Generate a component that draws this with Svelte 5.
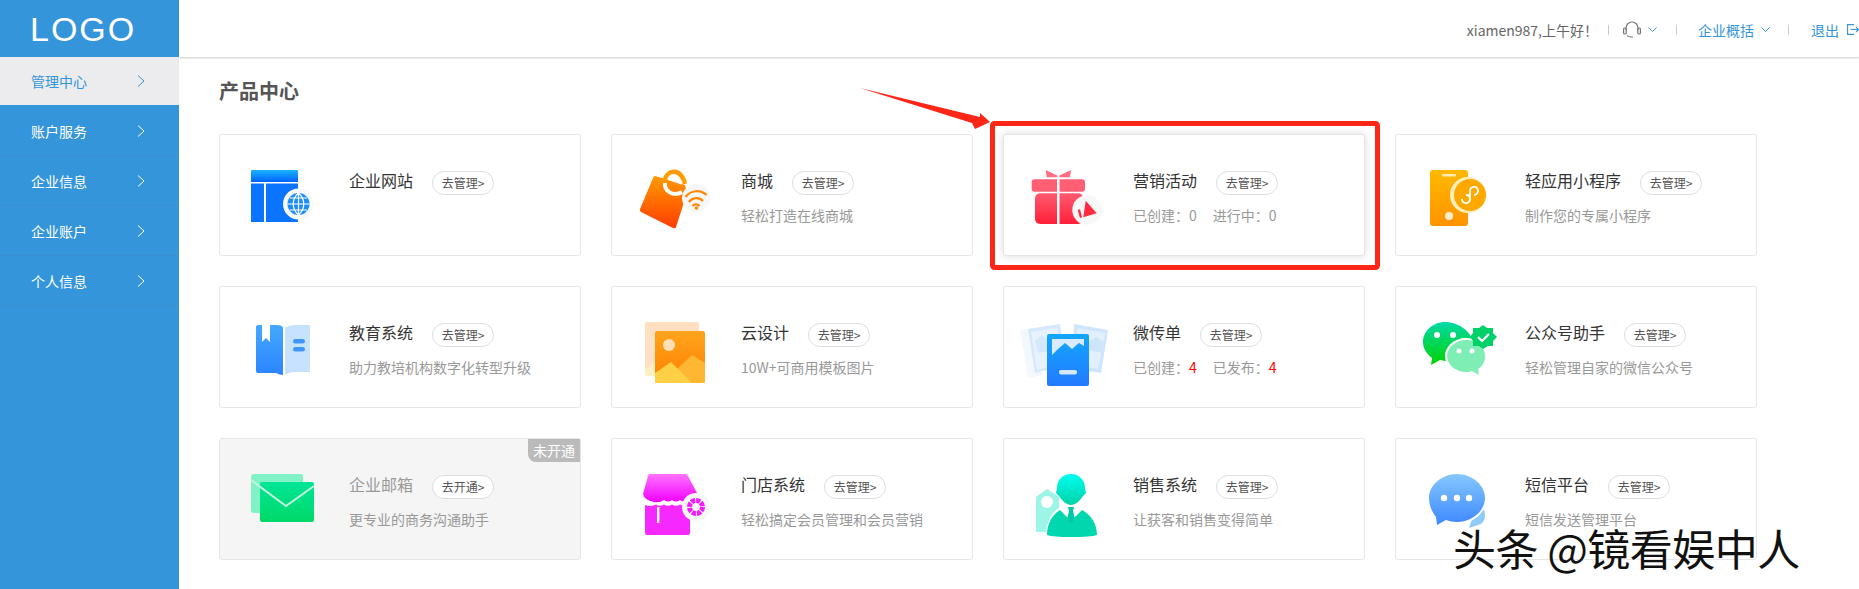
<script>
    const menu = ["管理中心", "账户服务", "企业信息", "企业账户", "个人信息"];

    const cards = [
        { icon: "site", name: "企业网站", desc: "" },
        { icon: "mall", name: "商城", desc: "轻松打造在线商城" },
        { icon: "gift", name: "营销活动", stats: [["已创建：", "0"], ["进行中：", "0"]], hover: true },
        { icon: "mini", name: "轻应用小程序", desc: "制作您的专属小程序" },
        { icon: "edu", name: "教育系统", desc: "助力教培机构数字化转型升级" },
        { icon: "design", name: "云设计", desc: "10W+可商用模板图片" },
        { icon: "flyer", name: "微传单", stats: [["已创建：", "4"], ["已发布：", "4"]], red: true },
        { icon: "wechat", name: "公众号助手", desc: "轻松管理自家的微信公众号" },
        { icon: "mail", name: "企业邮箱", desc: "更专业的商务沟通助手", off: true },
        { icon: "store", name: "门店系统", desc: "轻松搞定会员管理和会员营销" },
        { icon: "sales", name: "销售系统", desc: "让获客和销售变得简单" },
        { icon: "sms", name: "短信平台", desc: "短信发送管理平台" }
    ];
</script>

<div class="page">
    <aside>
        <div class="logo">LOGO</div>
        {#each menu as item, i}
            <div class="menu-item" class:active={i == 0}>
                <span>{item}</span>
                <svg width="8" height="12" viewBox="0 0 8 12"><path d="M1 .5 7 6 1 11.500" fill="none" stroke="currentColor" stroke-width="1" /></svg>
            </div>
        {/each}
    </aside>

    <main>
        <header>
            <span class="hello">xiamen987,上午好！</span>
            <i class="sep"></i>
            <svg class="headset" width="18" height="17" viewBox="0 0 18 17" fill="none" stroke="#777" stroke-width="1.200">
                <path d="M3 9V7a6 6 0 0 1 12 0v2" />
                <rect x=".6" y="7" width="2.600" height="6" rx="1" />
                <rect x="14.800" y="7" width="2.600" height="6" rx="1" />
                <path d="M4 14.500c1 1.500 3 1.500 6 1.500" />
            </svg>
            <svg class="chev" width="9" height="5" viewBox="0 0 9 5"><path d="M.5.500 4.500 4.500 8.500.5" fill="none" stroke="#3595db" /></svg>
            <i class="sep sep2"></i>
            <span class="link">企业概括</span>
            <svg class="chev" width="9" height="5" viewBox="0 0 9 5"><path d="M.5.500 4.500 4.500 8.500.5" fill="none" stroke="#3595db" /></svg>
            <i class="sep sep3"></i>
            <span class="link">退出</span>
            <svg class="logout" width="12" height="11" viewBox="0 0 12 11" fill="none" stroke="#3595db" stroke-width="1.100">
                <path d="M7 .6H.6v9.800H7M3.500 5.500H11.500M9 3l2.500 2.500L9 8" />
            </svg>
        </header>

        <h2>产品中心</h2>

        <div class="grid">
            {#each cards as c}
                <div class="card" class:off={c.off} class:hover={c.hover}>
                    <svg class="icon" width="80" height="80" viewBox="0 0 80 80">
                        <defs>
                            <linearGradient id="g-{c.icon}" x1="0" y1="0" x2="0" y2="1">
                                {#if c.icon == "site"}<stop offset="0" stop-color="#19b5ff" /><stop offset="1" stop-color="#0062ff" />
                                {:else if c.icon == "mall"}<stop offset="0" stop-color="#ff9a00" /><stop offset="1" stop-color="#ff3d00" />
                                {:else if c.icon == "gift"}<stop offset="0" stop-color="#ff5a70" /><stop offset="1" stop-color="#ff1f38" />
                                {:else if c.icon == "mini"}<stop offset="0" stop-color="#ffb900" /><stop offset="1" stop-color="#ff9300" />
                                {:else if c.icon == "edu"}<stop offset="0" stop-color="#45a8ff" /><stop offset="1" stop-color="#2b84ff" />
                                {:else if c.icon == "design"}<stop offset="0" stop-color="#ffa41c" /><stop offset="1" stop-color="#ff8000" />
                                {:else if c.icon == "flyer"}<stop offset="0" stop-color="#12a8ff" /><stop offset="1" stop-color="#2379ff" />
                                {:else if c.icon == "wechat"}<stop offset="0" stop-color="#00d9a8" /><stop offset="1" stop-color="#00d400" />
                                {:else if c.icon == "mail"}<stop offset="0" stop-color="#00e696" /><stop offset="1" stop-color="#00d968" />
                                {:else if c.icon == "store"}<stop offset="0" stop-color="#ff73ff" /><stop offset="1" stop-color="#f000ff" />
                                {:else if c.icon == "sales"}<stop offset="0" stop-color="#00fff0" /><stop offset="1" stop-color="#00d2a8" />
                                {:else}<stop offset="0" stop-color="#85c8ff" /><stop offset="1" stop-color="#3d88ff" />{/if}
                            </linearGradient>
                        </defs>
                        {#if c.icon == "site"}
                            <path d="M2 16a1 1 0 0 1 1-1h45a1 1 0 0 1 1 1v11H2z" fill="url(#g-site)" />
                            <rect x="2" y="28.500" width="13" height="38.500" fill="#0a74ff" />
                            <rect x="17" y="28.500" width="32" height="38.500" fill="#0a74ff" />
                            <circle cx="49.500" cy="49" r="15.500" fill="#f7f9fb" />
                            <circle cx="49.500" cy="49" r="11" fill="#1e8cf5" />
                            <path d="M38.500 49h22M49.500 38v22M41 43h17M41 55h17M49.500 38c-7 6-7 16 0 22M49.500 38c7 6 7 16 0 22" stroke="#fff" stroke-width="1.200" fill="none" />
                        {:else if c.icon == "mall"}
                            <path d="M14 21 Q12.500 21 12 23L-1 54Q-1.500 56 0 57L32 73Q34.500 74 35 72L46 38 44 30z" fill="url(#g-mall)" />
                            <path d="M23 27C26 13 40 13 44 29" fill="none" stroke="#ff9d00" stroke-width="4.500" />
                            <path d="M24 28C23 36 32 42 41 37" fill="none" stroke="#fff" stroke-width="4" />
                            <path d="M28 23.500 41 28" fill="none" stroke="#fff" stroke-width="3" />
                            <circle cx="55" cy="43" r="14" fill="#f7f7f7" />
                            <path d="M44.500 42a14 14 0 0 1 21-2M48 47a9 9 0 0 1 14-1M51.500 51a4.500 4.500 0 0 1 7 0" fill="none" stroke="#ff8a00" stroke-width="2.200" />
                            <circle cx="55.500" cy="53" r="1.800" fill="#ff8a00" />
                        {:else if c.icon == "gift"}
                            <path d="M12.700 15 24.700 20.700 24 22.300H13.700zM26 20.700 38 15 37 22.300H26.700z" fill="#ff6f83" />
                            <rect x="-1.300" y="24.300" width="53.300" height="12.400" rx="3" fill="#ff5f75" />
                            <rect x="2" y="38.300" width="48.300" height="30.700" rx="5" fill="url(#g-gift)" />
                            <rect x="24" y="24" width="2.500" height="46" fill="#fff" />
                            <circle cx="54" cy="55" r="14.700" fill="#f7f7f7" />
                            <path d="M52.700 45.700 63.700 58.300 50.300 62.300zM44.700 55 47 54.300 49 62 47 63.300z" fill="#ff2b43" />
                        {:else if c.icon == "mini"}
                            <rect x="5" y="15" width="38" height="56" rx="3" fill="url(#g-mini)" />
                            <rect x="17" y="19" width="14" height="2.500" rx="1.200" fill="#ffedb8" />
                            <circle cx="24" cy="61" r="4" fill="#ffeecb" />
                            <circle cx="43" cy="40" r="18" fill="#ffeeb8" />
                            <circle cx="45" cy="40" r="16" fill="#ffa800" />
                            <path d="M37 44c0 6 8 5 8 0v-8c0-5 8-6 8 0 0 3-3 4-4 4M45 44c0-2-1-4-4-4" fill="none" stroke="#fff" stroke-width="1.800" />
                        {:else if c.icon == "edu"}
                            <path d="M7 20a2 2 0 0 1 2-2h4v17l4-4 4 4V18h6q7 0 7 3v47q-3 0-7-2H9a2 2 0 0 1-2-2z" fill="url(#g-edu)" />
                            <path d="M36 21q3-3 13-3h12v47H46q-6 0-10 3z" fill="#c7e2ff" />
                            <rect x="44" y="32" width="12" height="4.500" rx="2.200" fill="#3e98ff" />
                            <rect x="44" y="40" width="12" height="4.500" rx="2.200" fill="#3e98ff" />
                        {:else if c.icon == "design"}
                            <rect x="4" y="15" width="54" height="54" rx="2" fill="#ffe1c2" />
                            <path d="M4 63 14 55V69H6a2 2 0 0 1-2-2z" fill="#fff0c4" />
                            <rect x="14" y="24" width="50" height="52" rx="2" fill="url(#g-design)" />
                            <circle cx="28" cy="38" r="6" fill="#ffe0b5" />
                            <path d="M64 56 51 48 36 62 50 76H62a2 2 0 0 0 2-2z" fill="#ffb733" />
                            <path d="M14 66 30 55 51 76H16a2 2 0 0 1-2-2z" fill="#ffd045" />
                        {:else if c.icon == "flyer"}
                            <path d="M-13 23 3 21 10 68-5 71z" fill="#f3f8fe" />
                            <path d="M-5 22 27 17 33 58 2 66z" fill="#d6e8fc" />
                            <path d="M-2 25 24 21 30 56 4 63z" fill="#e7f2fe" />
                            <path d="M2 34 9 28 17 34 25 30 27 42 5 46z" fill="#d6e8fc" />
                            <path d="M41 17 75 23 68 66 40 62z" fill="#cfe5fd" />
                            <path d="M44 21 72 26 65 62 44 58z" fill="#e2effe" />
                            <path d="M56 34 64 30 71 35 69 46 56 43z" fill="#cfe5fd" />
                            <rect x="14" y="27" width="42" height="52" rx="2" fill="url(#g-flyer)" />
                            <path d="M19 32H51V39L46 36 39 42 32 36 25 42 19 48z" fill="#d9ecff" />
                            <rect x="26" y="63" width="18" height="4.500" rx="2" fill="#d4e8ff" />
                        {:else if c.icon == "wechat"}
                            <path d="M20 15C8 15-2 24-2 35c0 7 4 12 9 16l-1 7 9-5c2 0 4 1 5 1h25c3-4 5-9 3-19C46 24 33 15 20 15z" fill="url(#g-wechat)" />
                            <circle cx="12" cy="28" r="3" fill="#fff" />
                            <circle cx="28" cy="28" r="3" fill="#fff" />
                            <path d="M41 31c-11 0-21 8-21 18 0 10 10 17 21 17 2 0 4 0 6-1l9 5-2-7c5-3 7-8 7-14 0-10-9-18-20-18z" fill="#fff" />
                            <path d="M41 33c-10 0-19 7-19 16s9 16 19 16c2 0 4 0 6-1l7 4-1-6c5-3 7-8 7-13 0-9-8-16-19-16z" fill="#7eeeb4" />
                            <circle cx="34" cy="44" r="2.500" fill="#fff" />
                            <circle cx="47" cy="44" r="2.500" fill="#fff" />
                            <path d="M58 18 62 21 68 21 68 26 72 30 68 34 68 39 63 39 58 42 54 39 48 39 48 34 45 30 48 26 48 21 54 21z" fill="#00d068" />
                            <path d="M53 30 57 34 64 27" fill="none" stroke="#fff" stroke-width="2.200" />
                        {:else if c.icon == "mail"}
                            <rect x="2" y="15" width="52" height="39" rx="3" fill="#80f2c6" />
                            <rect x="11" y="23" width="54" height="40" rx="2" fill="url(#g-mail)" />
                            <path d="M2 21 37 47 65 27" fill="none" stroke="#c4f7e0" stroke-width="2" />
                        {:else if c.icon == "store"}
                            <path d="M7 17a2 2 0 0 1 2-2h36l2 2 9 17q0 5-7 8-7 2-10-1-4 3-8 0-4 3-8 0-4 3-10 2-10-2-11-8z" fill="url(#g-store)" />
                            <path d="M4 46q6 2 11-.5 4 2.500 8 0 4 2.500 8 0 4 2.500 8 0 5 2.500 10 .5V74a2 2 0 0 1-2 2H6a2 2 0 0 1-2-2z" fill="#f529ff" />
                            <rect x="16" y="48" width="2.400" height="16" fill="#fff" />
                            <circle cx="55" cy="48" r="14" fill="#f7f7f7" />
                            <circle cx="55" cy="48" r="6.500" fill="none" stroke="#f41cff" stroke-width="5" stroke-dasharray="4 1" />
                        {:else if c.icon == "sales"}
                            <path d="M3 38 14 30 26 38V73H3z" fill="#9cf5e6" />
                            <circle cx="14" cy="43" r="6" fill="#fff" />
                            <path d="M24 78q-11 0-11-3c0-12 6-22 13-26l12 12 12-12c8 4 14 14 14 26q0 3-12 3z" fill="#fff" />
                            <path d="M38 15c8 0 14 6 14 14l1 5-3 3c-3 5-8 9-12 9s-9-4-12-9l-3-3 1-5c0-8 6-14 14-14z" fill="url(#g-sales)" />
                            <path d="M14 76c0-12 6-21 13-25l11 11 11-11c8 4 15 13 15 25q-6 2-26 2-18 0-24-2z" fill="#00d7ae" />
                            <path d="M35 48h6l-1 4 2 8-4 5-4-5 2-8z" fill="#00c9a3" />
                        {:else}
                            <path d="M52 46q8 1 8 10 0 6-4 9l-12 4z" fill="#8ecbfb" />
                            <path d="M32 13c16 0 30 11 30 26 0 14-14 26-30 26-4 0-8-1-11-2l-10 5-1-9C5 54 2 47 2 39 2 24 16 13 32 13z" fill="#fff" />
                            <path d="M32 15c15 0 28 11 28 24S47 63 32 63c-4 0-8-1-11-2l-9 5-1-8C7 53 4 46 4 39 4 26 17 15 32 15z" fill="url(#g-sms)" />
                            <circle cx="19" cy="39" r="3.200" fill="#fff" />
                            <circle cx="32" cy="39" r="3.200" fill="#fff" />
                            <circle cx="44" cy="39" r="3.200" fill="#fff" />
                        {/if}
                    </svg>

                    <div class="info">
                        <div class="top">
                            <span class="name">{c.name}</span>
                            <span class="btn">{c.off ? "去开通" : "去管理"}&gt;</span>
                        </div>
                        {#if c.stats}
                            <div class="desc">
                                {#each c.stats as s}
                                    <span class="stat">{s[0]}<b class:red={c.red}>{s[1]}</b></span>
                                {/each}
                            </div>
                        {:else if c.desc}
                            <div class="desc">{c.desc}</div>
                        {/if}
                    </div>

                    {#if c.off}<span class="badge">未开通</span>{/if}
                </div>
            {/each}
        </div>
    </main>

    <!-- annotation drawn over the screenshot -->
    <svg class="mark" width="1859" height="589" viewBox="0 0 1859 589">
        <rect x="992.500" y="123.500" width="385" height="144" rx="2" fill="none" stroke="#ff2618" stroke-width="5" />
        <path d="M860 88 980 117 980 113 990 122 975 129 972 123z" fill="#ff2618" />
    </svg>
    <div class="watermark">头条 @镜看娱中人</div>
</div>

<style>
    :global(body) {
        overflow: hidden;
    }

    .page {
        position: relative;
        display: flex;
        width: 1859px;
        height: 589px;
        overflow: hidden;
        background: #fff;
        font-family: "Noto Sans CJK SC", sans-serif;
        font-size: 14px;
        color: #333;
    }

    aside {
        width: 179px;
        flex: none;
        background: #3595db;
        color: #fff;
    }

    .logo {
        height: 57px;
        padding-left: 30px;
        font-family: "Liberation Sans", sans-serif;
        font-size: 34px;
        line-height: 59px;
        letter-spacing: 2px;
    }

    .menu-item {
        display: flex;
        align-items: center;
        justify-content: space-between;
        height: 50px;
        padding: 0 34px 0 31px;
        box-sizing: border-box;
        border-bottom: 1px solid #3a8fd0;
        color: #fff;
    }

    .menu-item.active {
        height: 48px;
        margin-bottom: 1px;
        background: #ececee;
        color: #3595db;
        border: 0;
    }

    main {
        flex: 1;
        min-width: 0;
    }

    header {
        display: flex;
        align-items: center;
        justify-content: flex-end;
        height: 57px;
        box-sizing: border-box;
        padding-top: 2px;
        box-shadow: 0 1px 2px rgba(0, 0, 0, 0.2);
    }

    .hello {
        color: #666;
    }

    .sep {
        width: 1px;
        height: 10px;
        background: #ccc;
        margin: 0 14px 0 10px;
    }

    .sep2 {
        margin: 0 21px 0 19px;
    }

    .sep3 {
        margin: 0 22px 0 18px;
    }

    .chev {
        margin-left: 7px;
    }

    .link {
        color: #3595db;
    }

    .logout {
        margin-left: 8px;
    }

    h2 {
        margin: 0 0 0 40px;
        padding-top: 20px;
        height: 57px;
        box-sizing: border-box;
        font-size: 20px;
        line-height: 28px;
        font-weight: 700;
        color: #555;
    }

    .grid {
        display: grid;
        grid-template-columns: repeat(4, 362px);
        grid-auto-rows: 122px;
        gap: 30px;
        margin: 20px 0 0 40px;
    }

    .card {
        position: relative;
        display: flex;
        box-sizing: border-box;
        padding: 20px 0 0 29px;
        border: 1px solid #e6e6e6;
        border-radius: 3px;
        background: #fff;
    }

    .card.hover {
        box-shadow: 0 0 8px rgba(0, 0, 0, 0.15);
    }

    .card.off {
        background: #f5f5f5;
    }

    .icon {
        flex: none;
        overflow: visible;
    }

    .info {
        margin-left: 20px;
        padding-top: 14px;
    }

    .top {
        display: flex;
        align-items: center;
        height: 24px;
    }

    .name {
        margin-bottom: 2px;
        font-size: 16px;
        color: #333;
    }

    .off .name {
        color: #999;
    }

    .btn {
        box-sizing: border-box;
        width: 62px;
        height: 24px;
        margin: 4px 0 0 19px;
        border: 1px solid #ddd;
        border-radius: 12px;
        background: #fff;
        font-size: 12px;
        line-height: 22px;
        text-align: center;
        color: #555;
    }

    .desc {
        margin-top: 12px;
        line-height: 20px;
        color: #999;
    }

    .stat {
        margin-right: 16px;
    }

    .stat b {
        font-weight: 400;
    }

    .stat b.red {
        color: #ff0000;
    }

    .badge {
        position: absolute;
        top: 0;
        right: 0;
        width: 52px;
        height: 23px;
        border-bottom-left-radius: 8px;
        background: #bbb;
        color: #fff;
        line-height: 22px;
        text-align: center;
    }

    .mark {
        position: absolute;
        top: 0;
        left: 0;
        pointer-events: none;
    }

    .watermark {
        position: absolute;
        left: 1453px;
        top: 518px;
        font-size: 43px;
        letter-spacing: -0.5px;
        line-height: 58px;
        white-space: nowrap;
        color: #111;
        text-shadow: 1px 1px 1px #fff;
    }
</style>
